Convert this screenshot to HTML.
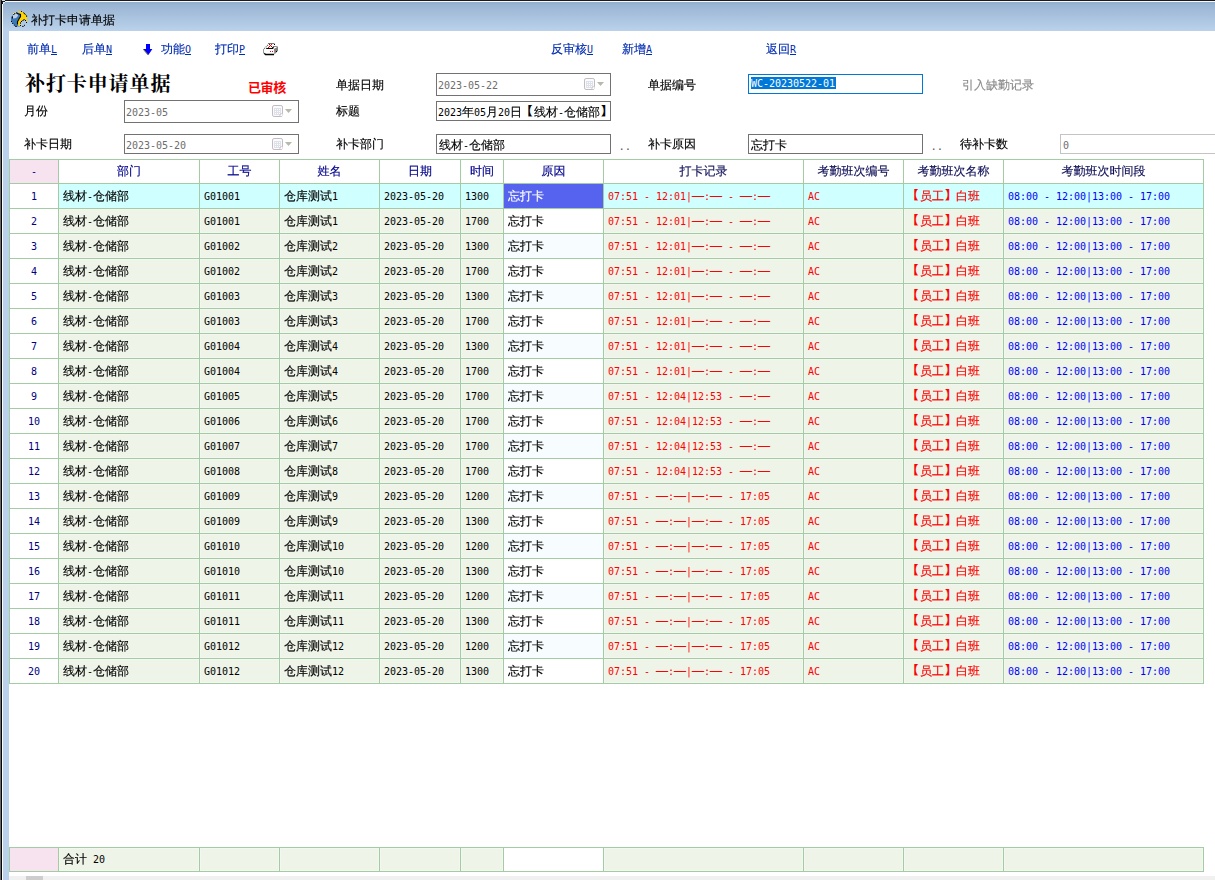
<!DOCTYPE html>
<html lang="zh-CN">
<head>
<meta charset="utf-8">
<title>补打卡申请单据</title>
<style>
*{box-sizing:border-box;margin:0;padding:0}
html,body{width:1215px;height:880px;overflow:hidden;background:#fff}
body{position:relative;-webkit-text-stroke:0.15px;font-family:"Liberation Sans", "WenQuanYi Zen Hei", "Noto Sans CJK SC", sans-serif;font-size:12px;color:#000;line-height:14px}
.abs,.t,.box,.c{position:absolute;white-space:nowrap}
.l{-webkit-text-stroke:0;font-family:"DejaVu Sans Mono","Liberation Mono",monospace;font-size:10px;letter-spacing:-0.02px}
#tb{left:0;top:0;width:1215px;height:31px;background:linear-gradient(#90adcd 2px,#9ab5d3 5px,#b9d1ea 30px)}
#tbt{left:0;top:0;width:1215px;height:1px;background:#1a1a1a}
#tbh{left:5px;top:1px;width:1210px;height:1px;background:#f6f9fd}
#lb{left:0;top:31px;width:9px;height:849px;background:#b9d1ea}
#lb0{left:0;top:0;width:1px;height:880px;background:#6a6a6a}
#lb1{left:1px;top:1px;width:1px;height:879px;background:#050505}
#lb2{left:2px;top:4px;width:1px;height:876px;background:#fbfdff}
.t{height:14px;line-height:14px}
.m{color:#002cb0}
.m u{text-decoration:underline}
.box{border:1px solid #727272;background:#fff;line-height:14px}
.box span.v{position:absolute;left:1px}
.gr{color:#6d6d6d}
#grid{left:9px;top:159px;width:1195px;height:525px;background:#a4cca4}
#foot{left:9px;top:847px;width:1195px;height:25px;background:#a4cca4}
.c{height:24px;line-height:24px;padding-left:4px;overflow:hidden;background:#fff}
.c.h{text-align:center;padding-left:0;line-height:23px;color:#00008c;background:#fff}
.c.hd{color:#101058}
.c.pk{background:#f6e3ef}
.c.n{text-align:center;padding-left:0;color:#000080;background:#fff}
.c.g{background:#eef4e8;box-shadow:inset 0 0 0 1px #f4f7ef}
.c.sel{background:#d0ffff}
.c.selc{background:#5563ee;color:#fff}
.c.w{background:#fff}
.c.az{background:#f7fdfe}
.c.r{color:#ff0000}
.c.r2{color:#ff0000}
.k{font-family:"Liberation Sans","Noto Sans CJK SC",sans-serif;font-weight:bold;position:relative}
.kl{left:-1.5px}
.kr{left:1px}
.c.b{color:#0000ff}
.c.f{line-height:23px}
#sb{left:9px;top:876px;width:1206px;height:4px;background:#f0f0f0}
#sbt{left:26px;top:876px;width:17px;height:4px;background:#cdcdcd}
</style>
</head>
<body>
<div class="abs" id="tb"></div>
<div class="abs" id="lb"></div>
<div class="abs" id="tbt"></div>
<div class="abs" id="tbh"></div>
<div class="abs" id="lb0"></div>
<div class="abs" id="lb1"></div>
<div class="abs" id="lb2"></div>

<div class="abs" style="left:2px;top:0;width:3px;height:1px;background:#d5e0ee"></div>
<div class="abs" style="left:2px;top:1px;width:3px;height:1px;background:#151515"></div>
<div class="abs" style="left:2px;top:2px;width:1px;height:2px;background:#151515"></div>
<div class="abs" style="left:3px;top:2px;width:2px;height:1px;background:#e6edf6"></div>
<div class="abs" style="left:3px;top:3px;width:1px;height:1px;background:#e6edf6"></div>
<!-- app icon -->
<svg class="abs" style="left:11px;top:11px" width="17" height="16" viewBox="0 0 17 16">
<path d="M5.5 1.3 L6.5 2.5 L9.5 3.5 L9.5 5.8 L8.5 7 L7.5 9 L6.5 10.8 L6.5 13.5 L7 14.5 L9.5 15.5 L4.5 15.5 L0 10.5 L0 6.2 L1.3 5.2 L2 3.3 L4 2.7 Z" fill="#3b79b4"/>
<path d="M2.2 3.5 L5 2.7 L6.8 3.6 L7 4.8 L5.8 6.2 L4.4 7.3 L2 7.5 L1.6 5.2 Z" fill="#bfd0e6"/>
<path d="M6 .3 L10.5 .2 L14.5 3.5 L16 5.3 L16 11 L15.5 10.5 L13 8 L10.5 9.5 L9 14.5 L7 14.5 L7 9.5 L9 7 L10 4.5 L9 2 Z" fill="#ffd200"/>
<path d="M5.5 1.3 L6.5 2.5 L9.5 3.5 L9.5 5.8 L8.5 7 L7.5 9 L6.5 10.8 L6.5 13.5" fill="none" stroke="#000" stroke-width="1.1"/>
<path d="M2 3.3 L4 2.7 M1.3 5.2 L1.5 7.5 M0 10.5 h1 M1.2 12.5 h1 M2.8 14.2 h1 M4.2 15.4 H5.8 M10 .4 h1 M12.3 1.6 L14.6 3.7 M15.6 4.4 v1.4 M15 11.5 h1 M9.5 11.4 v1.3 M10 10.5 h1 M11.4 9.6 L13.6 8.5 M14 9.5 h1 M9 14.5 h1 M11.2 15.4 h1.4 M13 14.3 h1" fill="none" stroke="#000" stroke-width="1"/>
<rect x="2" y="2" width="1" height="1" fill="#ffe680"/><rect x="4" y="1" width="1" height="1" fill="#ffd200"/>
</svg>
<div class="t" style="left:31px;top:13px">补打卡申请单据</div>

<!-- toolbar -->
<div class="t m" style="left:27px;top:42px">前单<u class="l">L</u></div>
<div class="t m" style="left:82px;top:42px">后单<u class="l">N</u></div>
<svg class="abs" style="left:142px;top:43px" width="12" height="13" viewBox="0 0 12 13"><path d="M4 1 H8 V6 H10.4 L6.3 11.9 L1.3 6 H4 Z" fill="#0000ff"/><path d="M1.3 6.3 L6 11.9" stroke="#6b6b28" stroke-width="1" fill="none"/></svg>
<div class="t m" style="left:161px;top:42px">功能<u class="l">O</u></div>
<div class="t m" style="left:215px;top:42px">打印<u class="l">P</u></div>
<svg class="abs" style="left:262px;top:42px" width="18" height="14" viewBox="0 0 18 14">
<path d="M6 1.5 H12.5" stroke="#777" stroke-width="1"/><rect x="12" y="2" width="1" height="1" fill="#000"/>
<path d="M6 3 L2 7" stroke="#707070" stroke-width="1.1" stroke-dasharray="1.2 .9"/>
<g fill="#ff0000"><rect x="7" y="2" width="1" height="1" fill="#a00000"/><rect x="9" y="2" width="1" height="1"/><rect x="8" y="3" width="1" height="1"/><rect x="7" y="4" width="1" height="1"/><rect x="9" y="4" width="1" height="1" fill="#a00000"/><rect x="6" y="5" width="1" height="1"/><rect x="10" y="5" width="1" height="1" fill="#c02020"/></g>
<path d="M4.2 6.5 H10.8 L11.6 4.4" fill="none" stroke="#000" stroke-width="1.1"/>
<path d="M11.6 4.5 H14.8 L15.8 5.2" fill="none" stroke="#8c8c8c" stroke-width="1"/>
<path d="M12 7 L16 4.6 L16 8.8 L12.4 12.6 Z" fill="#808080"/>
<path d="M1.5 7 V11.5" stroke="#999" stroke-width="1"/>
<path d="M2.3 11.3 L3.5 12.5 H12" fill="none" stroke="#000" stroke-width="1.3"/>
<rect x="14" y="9" width="1" height="1" fill="#000"/>
<rect x="8" y="9" width="1" height="1" fill="#ff0000"/><rect x="10" y="9" width="1" height="1" fill="#ff0000"/>
</svg>
<div class="t m" style="left:551px;top:42px">反审核<u class="l">U</u></div>
<div class="t m" style="left:622px;top:42px">新增<u class="l">A</u></div>
<div class="t m" style="left:766px;top:42px">返回<u class="l">R</u></div>

<!-- form -->
<div class="abs" id="bigt" style="-webkit-text-stroke:0;left:25px;top:70px;height:28px;line-height:28px;font-family:'Liberation Serif','Noto Serif CJK SC',serif;font-weight:bold;font-size:20px;letter-spacing:0.9px">补打卡申请单据</div>
<div class="abs" id="ysh" style="-webkit-text-stroke:0;left:248px;top:80px;height:16px;line-height:16px;font-weight:bold;font-size:13px;color:#ff0000;letter-spacing:-0.4px;font-family:'Liberation Sans','Noto Sans CJK SC',sans-serif">已审核</div>

<div class="t" style="left:336px;top:78px">单据日期</div>
<div class="box" style="left:436px;top:73px;width:175px;height:23px"><span class="v gr" style="top:4px"><span class="l">2023-05-22</span></span><svg class="abs" style="left:147px;top:4px" width="20" height="12" viewBox="0 0 20 12"><rect x=".5" y=".5" width="10" height="11" rx="1.6" fill="#fbfbff" stroke="#c4bbbf"/><rect x="2" y="3" width="7" height="7" fill="#dde2ea"/><path d="M3 4h1v1h-1zM5 4h1v1h-1zM7 4h1v1h-1zM3 6h1v1h-1zM5 6h1v1h-1zM7 6h1v1h-1zM3 8h1v1h-1zM5 8h1v1h-1zM7 8h1v1h-1z" fill="#fafcff"/><path d="M8 11 L10.5 8.5 L10.5 11Z" fill="#fff"/><path d="M7.8 11 L8.2 9 L10.6 8.4" fill="none" stroke="#cac1c5" stroke-width=".8"/><path d="M13 4h7l-3.5 4z" fill="#b8b8ac"/></svg></div>
<div class="t" style="left:648px;top:78px">单据编号</div>
<div class="box" style="left:748px;top:74px;width:175px;height:20px;border-color:#0078d7"><span class="abs" style="left:2px;top:2px;height:12px;width:85px;background:#0078d7"></span><span class="v" style="left:2px;top:1px;color:#fff"><span class="l">WC-20230522-01</span></span></div>
<div class="t" style="left:962px;top:78px;color:#8a8a8a">引入缺勤记录</div>

<div class="t" style="left:24px;top:104px">月份</div>
<div class="box" style="left:124px;top:100px;width:175px;height:23px"><span class="v gr" style="top:4px"><span class="l">2023-05</span></span><svg class="abs" style="left:147px;top:4px" width="20" height="12" viewBox="0 0 20 12"><rect x=".5" y=".5" width="10" height="11" rx="1.6" fill="#fbfbff" stroke="#c4bbbf"/><rect x="2" y="3" width="7" height="7" fill="#dde2ea"/><path d="M3 4h1v1h-1zM5 4h1v1h-1zM7 4h1v1h-1zM3 6h1v1h-1zM5 6h1v1h-1zM7 6h1v1h-1zM3 8h1v1h-1zM5 8h1v1h-1zM7 8h1v1h-1z" fill="#fafcff"/><path d="M8 11 L10.5 8.5 L10.5 11Z" fill="#fff"/><path d="M7.8 11 L8.2 9 L10.6 8.4" fill="none" stroke="#cac1c5" stroke-width=".8"/><path d="M13 4h7l-3.5 4z" fill="#b8b8ac"/></svg></div>
<div class="t" style="left:336px;top:104px">标题</div>
<div class="box" style="left:436px;top:101px;width:175px;height:20px;overflow:hidden"><span class="v" style="top:3px"><span class="l">2023</span>年<span class="l">05</span>月<span class="l">20</span>日<span class="k kl">【</span>线材<span class="l">-</span>仓储部<span class="k kr">】</span></span></div>

<div class="t" style="left:24px;top:137px">补卡日期</div>
<div class="box" style="left:124px;top:134px;width:175px;height:20px"><span class="v gr" style="top:3px"><span class="l">2023-05-20</span></span><svg class="abs" style="left:147px;top:3px" width="20" height="12" viewBox="0 0 20 12"><rect x=".5" y=".5" width="10" height="11" rx="1.6" fill="#fbfbff" stroke="#c4bbbf"/><rect x="2" y="3" width="7" height="7" fill="#dde2ea"/><path d="M3 4h1v1h-1zM5 4h1v1h-1zM7 4h1v1h-1zM3 6h1v1h-1zM5 6h1v1h-1zM7 6h1v1h-1zM3 8h1v1h-1zM5 8h1v1h-1zM7 8h1v1h-1z" fill="#fafcff"/><path d="M8 11 L10.5 8.5 L10.5 11Z" fill="#fff"/><path d="M7.8 11 L8.2 9 L10.6 8.4" fill="none" stroke="#cac1c5" stroke-width=".8"/><path d="M13 4h7l-3.5 4z" fill="#b8b8ac"/></svg></div>
<div class="t" style="left:336px;top:137px">补卡部门</div>
<div class="box" style="left:436px;top:134px;width:175px;height:20px"><span class="v" style="left:2px;top:3px">线材<span class="l">-</span>仓储部</span></div>
<div class="t" style="left:620px;top:139px;color:#555"><span style="letter-spacing:3px">..</span></div>
<div class="t" style="left:648px;top:137px">补卡原因</div>
<div class="box" style="left:748px;top:134px;width:175px;height:20px"><span class="v" style="left:2px;top:3px">忘打卡</span></div>
<div class="t" style="left:932px;top:139px;color:#555"><span style="letter-spacing:3px">..</span></div>
<div class="t" style="left:960px;top:137px">待补卡数</div>
<div class="box" style="left:1060px;top:134px;width:160px;height:20px;border-color:#c4c4c4"><span class="v gr" style="left:2px;top:3px"><span class="l">0</span></span></div>

<div class="abs" id="grid">
<div class="c h pk" style="left:1px;top:1px;width:48px;height:23px"><span class="l">-</span></div>
<div class="c h" style="left:50px;top:1px;width:140px;height:23px">部门</div>
<div class="c h" style="left:191px;top:1px;width:79px;height:23px">工号</div>
<div class="c h" style="left:271px;top:1px;width:99px;height:23px">姓名</div>
<div class="c h" style="left:371px;top:1px;width:80px;height:23px">日期</div>
<div class="c h" style="left:452px;top:1px;width:42px;height:23px">时间</div>
<div class="c h" style="left:495px;top:1px;width:99px;height:23px">原因</div>
<div class="c h hd" style="left:595px;top:1px;width:199px;height:23px">打卡记录</div>
<div class="c h hd" style="left:795px;top:1px;width:99px;height:23px">考勤班次编号</div>
<div class="c h hd" style="left:895px;top:1px;width:99px;height:23px">考勤班次名称</div>
<div class="c h hd" style="left:995px;top:1px;width:199px;height:23px">考勤班次时间段</div>
<div class="c n" style="left:1px;top:25px;width:48px"><span class="l">1</span></div>
<div class="c sel" style="left:50px;top:25px;width:140px">线材<span class="l">-</span>仓储部</div>
<div class="c sel" style="left:191px;top:25px;width:79px"><span class="l">G01001</span></div>
<div class="c sel" style="left:271px;top:25px;width:99px">仓库测试<span class="l">1</span></div>
<div class="c sel" style="left:371px;top:25px;width:80px"><span class="l">2023-05-20</span></div>
<div class="c sel" style="left:452px;top:25px;width:42px"><span class="l">1300</span></div>
<div class="c selc" style="left:495px;top:25px;width:99px">忘打卡</div>
<div class="c sel r" style="left:595px;top:25px;width:199px"><span class="l">07:51 - 12:01|</span>—<span class="l">:</span>—<span class="l"> - </span>—<span class="l">:</span>—</div>
<div class="c sel r" style="left:795px;top:25px;width:99px"><span class="l">AC</span></div>
<div class="c sel r2" style="left:895px;top:25px;width:99px"><span class="k kl">【</span>员工<span class="k kr">】</span>白班</div>
<div class="c sel b" style="left:995px;top:25px;width:199px"><span class="l">08:00 - 12:00|13:00 - 17:00</span></div>
<div class="c n" style="left:1px;top:50px;width:48px"><span class="l">2</span></div>
<div class="c g" style="left:50px;top:50px;width:140px">线材<span class="l">-</span>仓储部</div>
<div class="c g" style="left:191px;top:50px;width:79px"><span class="l">G01001</span></div>
<div class="c g" style="left:271px;top:50px;width:99px">仓库测试<span class="l">1</span></div>
<div class="c g" style="left:371px;top:50px;width:80px"><span class="l">2023-05-20</span></div>
<div class="c g" style="left:452px;top:50px;width:42px"><span class="l">1700</span></div>
<div class="c w" style="left:495px;top:50px;width:99px">忘打卡</div>
<div class="c g r" style="left:595px;top:50px;width:199px"><span class="l">07:51 - 12:01|</span>—<span class="l">:</span>—<span class="l"> - </span>—<span class="l">:</span>—</div>
<div class="c g r" style="left:795px;top:50px;width:99px"><span class="l">AC</span></div>
<div class="c g r2" style="left:895px;top:50px;width:99px"><span class="k kl">【</span>员工<span class="k kr">】</span>白班</div>
<div class="c g b" style="left:995px;top:50px;width:199px"><span class="l">08:00 - 12:00|13:00 - 17:00</span></div>
<div class="c n" style="left:1px;top:75px;width:48px"><span class="l">3</span></div>
<div class="c g" style="left:50px;top:75px;width:140px">线材<span class="l">-</span>仓储部</div>
<div class="c g" style="left:191px;top:75px;width:79px"><span class="l">G01002</span></div>
<div class="c g" style="left:271px;top:75px;width:99px">仓库测试<span class="l">2</span></div>
<div class="c g" style="left:371px;top:75px;width:80px"><span class="l">2023-05-20</span></div>
<div class="c g" style="left:452px;top:75px;width:42px"><span class="l">1300</span></div>
<div class="c az" style="left:495px;top:75px;width:99px">忘打卡</div>
<div class="c g r" style="left:595px;top:75px;width:199px"><span class="l">07:51 - 12:01|</span>—<span class="l">:</span>—<span class="l"> - </span>—<span class="l">:</span>—</div>
<div class="c g r" style="left:795px;top:75px;width:99px"><span class="l">AC</span></div>
<div class="c g r2" style="left:895px;top:75px;width:99px"><span class="k kl">【</span>员工<span class="k kr">】</span>白班</div>
<div class="c g b" style="left:995px;top:75px;width:199px"><span class="l">08:00 - 12:00|13:00 - 17:00</span></div>
<div class="c n" style="left:1px;top:100px;width:48px"><span class="l">4</span></div>
<div class="c g" style="left:50px;top:100px;width:140px">线材<span class="l">-</span>仓储部</div>
<div class="c g" style="left:191px;top:100px;width:79px"><span class="l">G01002</span></div>
<div class="c g" style="left:271px;top:100px;width:99px">仓库测试<span class="l">2</span></div>
<div class="c g" style="left:371px;top:100px;width:80px"><span class="l">2023-05-20</span></div>
<div class="c g" style="left:452px;top:100px;width:42px"><span class="l">1700</span></div>
<div class="c w" style="left:495px;top:100px;width:99px">忘打卡</div>
<div class="c g r" style="left:595px;top:100px;width:199px"><span class="l">07:51 - 12:01|</span>—<span class="l">:</span>—<span class="l"> - </span>—<span class="l">:</span>—</div>
<div class="c g r" style="left:795px;top:100px;width:99px"><span class="l">AC</span></div>
<div class="c g r2" style="left:895px;top:100px;width:99px"><span class="k kl">【</span>员工<span class="k kr">】</span>白班</div>
<div class="c g b" style="left:995px;top:100px;width:199px"><span class="l">08:00 - 12:00|13:00 - 17:00</span></div>
<div class="c n" style="left:1px;top:125px;width:48px"><span class="l">5</span></div>
<div class="c g" style="left:50px;top:125px;width:140px">线材<span class="l">-</span>仓储部</div>
<div class="c g" style="left:191px;top:125px;width:79px"><span class="l">G01003</span></div>
<div class="c g" style="left:271px;top:125px;width:99px">仓库测试<span class="l">3</span></div>
<div class="c g" style="left:371px;top:125px;width:80px"><span class="l">2023-05-20</span></div>
<div class="c g" style="left:452px;top:125px;width:42px"><span class="l">1300</span></div>
<div class="c az" style="left:495px;top:125px;width:99px">忘打卡</div>
<div class="c g r" style="left:595px;top:125px;width:199px"><span class="l">07:51 - 12:01|</span>—<span class="l">:</span>—<span class="l"> - </span>—<span class="l">:</span>—</div>
<div class="c g r" style="left:795px;top:125px;width:99px"><span class="l">AC</span></div>
<div class="c g r2" style="left:895px;top:125px;width:99px"><span class="k kl">【</span>员工<span class="k kr">】</span>白班</div>
<div class="c g b" style="left:995px;top:125px;width:199px"><span class="l">08:00 - 12:00|13:00 - 17:00</span></div>
<div class="c n" style="left:1px;top:150px;width:48px"><span class="l">6</span></div>
<div class="c g" style="left:50px;top:150px;width:140px">线材<span class="l">-</span>仓储部</div>
<div class="c g" style="left:191px;top:150px;width:79px"><span class="l">G01003</span></div>
<div class="c g" style="left:271px;top:150px;width:99px">仓库测试<span class="l">3</span></div>
<div class="c g" style="left:371px;top:150px;width:80px"><span class="l">2023-05-20</span></div>
<div class="c g" style="left:452px;top:150px;width:42px"><span class="l">1700</span></div>
<div class="c w" style="left:495px;top:150px;width:99px">忘打卡</div>
<div class="c g r" style="left:595px;top:150px;width:199px"><span class="l">07:51 - 12:01|</span>—<span class="l">:</span>—<span class="l"> - </span>—<span class="l">:</span>—</div>
<div class="c g r" style="left:795px;top:150px;width:99px"><span class="l">AC</span></div>
<div class="c g r2" style="left:895px;top:150px;width:99px"><span class="k kl">【</span>员工<span class="k kr">】</span>白班</div>
<div class="c g b" style="left:995px;top:150px;width:199px"><span class="l">08:00 - 12:00|13:00 - 17:00</span></div>
<div class="c n" style="left:1px;top:175px;width:48px"><span class="l">7</span></div>
<div class="c g" style="left:50px;top:175px;width:140px">线材<span class="l">-</span>仓储部</div>
<div class="c g" style="left:191px;top:175px;width:79px"><span class="l">G01004</span></div>
<div class="c g" style="left:271px;top:175px;width:99px">仓库测试<span class="l">4</span></div>
<div class="c g" style="left:371px;top:175px;width:80px"><span class="l">2023-05-20</span></div>
<div class="c g" style="left:452px;top:175px;width:42px"><span class="l">1300</span></div>
<div class="c az" style="left:495px;top:175px;width:99px">忘打卡</div>
<div class="c g r" style="left:595px;top:175px;width:199px"><span class="l">07:51 - 12:01|</span>—<span class="l">:</span>—<span class="l"> - </span>—<span class="l">:</span>—</div>
<div class="c g r" style="left:795px;top:175px;width:99px"><span class="l">AC</span></div>
<div class="c g r2" style="left:895px;top:175px;width:99px"><span class="k kl">【</span>员工<span class="k kr">】</span>白班</div>
<div class="c g b" style="left:995px;top:175px;width:199px"><span class="l">08:00 - 12:00|13:00 - 17:00</span></div>
<div class="c n" style="left:1px;top:200px;width:48px"><span class="l">8</span></div>
<div class="c g" style="left:50px;top:200px;width:140px">线材<span class="l">-</span>仓储部</div>
<div class="c g" style="left:191px;top:200px;width:79px"><span class="l">G01004</span></div>
<div class="c g" style="left:271px;top:200px;width:99px">仓库测试<span class="l">4</span></div>
<div class="c g" style="left:371px;top:200px;width:80px"><span class="l">2023-05-20</span></div>
<div class="c g" style="left:452px;top:200px;width:42px"><span class="l">1700</span></div>
<div class="c w" style="left:495px;top:200px;width:99px">忘打卡</div>
<div class="c g r" style="left:595px;top:200px;width:199px"><span class="l">07:51 - 12:01|</span>—<span class="l">:</span>—<span class="l"> - </span>—<span class="l">:</span>—</div>
<div class="c g r" style="left:795px;top:200px;width:99px"><span class="l">AC</span></div>
<div class="c g r2" style="left:895px;top:200px;width:99px"><span class="k kl">【</span>员工<span class="k kr">】</span>白班</div>
<div class="c g b" style="left:995px;top:200px;width:199px"><span class="l">08:00 - 12:00|13:00 - 17:00</span></div>
<div class="c n" style="left:1px;top:225px;width:48px"><span class="l">9</span></div>
<div class="c g" style="left:50px;top:225px;width:140px">线材<span class="l">-</span>仓储部</div>
<div class="c g" style="left:191px;top:225px;width:79px"><span class="l">G01005</span></div>
<div class="c g" style="left:271px;top:225px;width:99px">仓库测试<span class="l">5</span></div>
<div class="c g" style="left:371px;top:225px;width:80px"><span class="l">2023-05-20</span></div>
<div class="c g" style="left:452px;top:225px;width:42px"><span class="l">1700</span></div>
<div class="c az" style="left:495px;top:225px;width:99px">忘打卡</div>
<div class="c g r" style="left:595px;top:225px;width:199px"><span class="l">07:51 - 12:04|12:53 - </span>—<span class="l">:</span>—</div>
<div class="c g r" style="left:795px;top:225px;width:99px"><span class="l">AC</span></div>
<div class="c g r2" style="left:895px;top:225px;width:99px"><span class="k kl">【</span>员工<span class="k kr">】</span>白班</div>
<div class="c g b" style="left:995px;top:225px;width:199px"><span class="l">08:00 - 12:00|13:00 - 17:00</span></div>
<div class="c n" style="left:1px;top:250px;width:48px"><span class="l">10</span></div>
<div class="c g" style="left:50px;top:250px;width:140px">线材<span class="l">-</span>仓储部</div>
<div class="c g" style="left:191px;top:250px;width:79px"><span class="l">G01006</span></div>
<div class="c g" style="left:271px;top:250px;width:99px">仓库测试<span class="l">6</span></div>
<div class="c g" style="left:371px;top:250px;width:80px"><span class="l">2023-05-20</span></div>
<div class="c g" style="left:452px;top:250px;width:42px"><span class="l">1700</span></div>
<div class="c w" style="left:495px;top:250px;width:99px">忘打卡</div>
<div class="c g r" style="left:595px;top:250px;width:199px"><span class="l">07:51 - 12:04|12:53 - </span>—<span class="l">:</span>—</div>
<div class="c g r" style="left:795px;top:250px;width:99px"><span class="l">AC</span></div>
<div class="c g r2" style="left:895px;top:250px;width:99px"><span class="k kl">【</span>员工<span class="k kr">】</span>白班</div>
<div class="c g b" style="left:995px;top:250px;width:199px"><span class="l">08:00 - 12:00|13:00 - 17:00</span></div>
<div class="c n" style="left:1px;top:275px;width:48px"><span class="l">11</span></div>
<div class="c g" style="left:50px;top:275px;width:140px">线材<span class="l">-</span>仓储部</div>
<div class="c g" style="left:191px;top:275px;width:79px"><span class="l">G01007</span></div>
<div class="c g" style="left:271px;top:275px;width:99px">仓库测试<span class="l">7</span></div>
<div class="c g" style="left:371px;top:275px;width:80px"><span class="l">2023-05-20</span></div>
<div class="c g" style="left:452px;top:275px;width:42px"><span class="l">1700</span></div>
<div class="c az" style="left:495px;top:275px;width:99px">忘打卡</div>
<div class="c g r" style="left:595px;top:275px;width:199px"><span class="l">07:51 - 12:04|12:53 - </span>—<span class="l">:</span>—</div>
<div class="c g r" style="left:795px;top:275px;width:99px"><span class="l">AC</span></div>
<div class="c g r2" style="left:895px;top:275px;width:99px"><span class="k kl">【</span>员工<span class="k kr">】</span>白班</div>
<div class="c g b" style="left:995px;top:275px;width:199px"><span class="l">08:00 - 12:00|13:00 - 17:00</span></div>
<div class="c n" style="left:1px;top:300px;width:48px"><span class="l">12</span></div>
<div class="c g" style="left:50px;top:300px;width:140px">线材<span class="l">-</span>仓储部</div>
<div class="c g" style="left:191px;top:300px;width:79px"><span class="l">G01008</span></div>
<div class="c g" style="left:271px;top:300px;width:99px">仓库测试<span class="l">8</span></div>
<div class="c g" style="left:371px;top:300px;width:80px"><span class="l">2023-05-20</span></div>
<div class="c g" style="left:452px;top:300px;width:42px"><span class="l">1700</span></div>
<div class="c w" style="left:495px;top:300px;width:99px">忘打卡</div>
<div class="c g r" style="left:595px;top:300px;width:199px"><span class="l">07:51 - 12:04|12:53 - </span>—<span class="l">:</span>—</div>
<div class="c g r" style="left:795px;top:300px;width:99px"><span class="l">AC</span></div>
<div class="c g r2" style="left:895px;top:300px;width:99px"><span class="k kl">【</span>员工<span class="k kr">】</span>白班</div>
<div class="c g b" style="left:995px;top:300px;width:199px"><span class="l">08:00 - 12:00|13:00 - 17:00</span></div>
<div class="c n" style="left:1px;top:325px;width:48px"><span class="l">13</span></div>
<div class="c g" style="left:50px;top:325px;width:140px">线材<span class="l">-</span>仓储部</div>
<div class="c g" style="left:191px;top:325px;width:79px"><span class="l">G01009</span></div>
<div class="c g" style="left:271px;top:325px;width:99px">仓库测试<span class="l">9</span></div>
<div class="c g" style="left:371px;top:325px;width:80px"><span class="l">2023-05-20</span></div>
<div class="c g" style="left:452px;top:325px;width:42px"><span class="l">1200</span></div>
<div class="c az" style="left:495px;top:325px;width:99px">忘打卡</div>
<div class="c g r" style="left:595px;top:325px;width:199px"><span class="l">07:51 - </span>—<span class="l">:</span>—<span class="l">|</span>—<span class="l">:</span>—<span class="l"> - 17:05</span></div>
<div class="c g r" style="left:795px;top:325px;width:99px"><span class="l">AC</span></div>
<div class="c g r2" style="left:895px;top:325px;width:99px"><span class="k kl">【</span>员工<span class="k kr">】</span>白班</div>
<div class="c g b" style="left:995px;top:325px;width:199px"><span class="l">08:00 - 12:00|13:00 - 17:00</span></div>
<div class="c n" style="left:1px;top:350px;width:48px"><span class="l">14</span></div>
<div class="c g" style="left:50px;top:350px;width:140px">线材<span class="l">-</span>仓储部</div>
<div class="c g" style="left:191px;top:350px;width:79px"><span class="l">G01009</span></div>
<div class="c g" style="left:271px;top:350px;width:99px">仓库测试<span class="l">9</span></div>
<div class="c g" style="left:371px;top:350px;width:80px"><span class="l">2023-05-20</span></div>
<div class="c g" style="left:452px;top:350px;width:42px"><span class="l">1300</span></div>
<div class="c w" style="left:495px;top:350px;width:99px">忘打卡</div>
<div class="c g r" style="left:595px;top:350px;width:199px"><span class="l">07:51 - </span>—<span class="l">:</span>—<span class="l">|</span>—<span class="l">:</span>—<span class="l"> - 17:05</span></div>
<div class="c g r" style="left:795px;top:350px;width:99px"><span class="l">AC</span></div>
<div class="c g r2" style="left:895px;top:350px;width:99px"><span class="k kl">【</span>员工<span class="k kr">】</span>白班</div>
<div class="c g b" style="left:995px;top:350px;width:199px"><span class="l">08:00 - 12:00|13:00 - 17:00</span></div>
<div class="c n" style="left:1px;top:375px;width:48px"><span class="l">15</span></div>
<div class="c g" style="left:50px;top:375px;width:140px">线材<span class="l">-</span>仓储部</div>
<div class="c g" style="left:191px;top:375px;width:79px"><span class="l">G01010</span></div>
<div class="c g" style="left:271px;top:375px;width:99px">仓库测试<span class="l">10</span></div>
<div class="c g" style="left:371px;top:375px;width:80px"><span class="l">2023-05-20</span></div>
<div class="c g" style="left:452px;top:375px;width:42px"><span class="l">1200</span></div>
<div class="c az" style="left:495px;top:375px;width:99px">忘打卡</div>
<div class="c g r" style="left:595px;top:375px;width:199px"><span class="l">07:51 - </span>—<span class="l">:</span>—<span class="l">|</span>—<span class="l">:</span>—<span class="l"> - 17:05</span></div>
<div class="c g r" style="left:795px;top:375px;width:99px"><span class="l">AC</span></div>
<div class="c g r2" style="left:895px;top:375px;width:99px"><span class="k kl">【</span>员工<span class="k kr">】</span>白班</div>
<div class="c g b" style="left:995px;top:375px;width:199px"><span class="l">08:00 - 12:00|13:00 - 17:00</span></div>
<div class="c n" style="left:1px;top:400px;width:48px"><span class="l">16</span></div>
<div class="c g" style="left:50px;top:400px;width:140px">线材<span class="l">-</span>仓储部</div>
<div class="c g" style="left:191px;top:400px;width:79px"><span class="l">G01010</span></div>
<div class="c g" style="left:271px;top:400px;width:99px">仓库测试<span class="l">10</span></div>
<div class="c g" style="left:371px;top:400px;width:80px"><span class="l">2023-05-20</span></div>
<div class="c g" style="left:452px;top:400px;width:42px"><span class="l">1300</span></div>
<div class="c w" style="left:495px;top:400px;width:99px">忘打卡</div>
<div class="c g r" style="left:595px;top:400px;width:199px"><span class="l">07:51 - </span>—<span class="l">:</span>—<span class="l">|</span>—<span class="l">:</span>—<span class="l"> - 17:05</span></div>
<div class="c g r" style="left:795px;top:400px;width:99px"><span class="l">AC</span></div>
<div class="c g r2" style="left:895px;top:400px;width:99px"><span class="k kl">【</span>员工<span class="k kr">】</span>白班</div>
<div class="c g b" style="left:995px;top:400px;width:199px"><span class="l">08:00 - 12:00|13:00 - 17:00</span></div>
<div class="c n" style="left:1px;top:425px;width:48px"><span class="l">17</span></div>
<div class="c g" style="left:50px;top:425px;width:140px">线材<span class="l">-</span>仓储部</div>
<div class="c g" style="left:191px;top:425px;width:79px"><span class="l">G01011</span></div>
<div class="c g" style="left:271px;top:425px;width:99px">仓库测试<span class="l">11</span></div>
<div class="c g" style="left:371px;top:425px;width:80px"><span class="l">2023-05-20</span></div>
<div class="c g" style="left:452px;top:425px;width:42px"><span class="l">1200</span></div>
<div class="c az" style="left:495px;top:425px;width:99px">忘打卡</div>
<div class="c g r" style="left:595px;top:425px;width:199px"><span class="l">07:51 - </span>—<span class="l">:</span>—<span class="l">|</span>—<span class="l">:</span>—<span class="l"> - 17:05</span></div>
<div class="c g r" style="left:795px;top:425px;width:99px"><span class="l">AC</span></div>
<div class="c g r2" style="left:895px;top:425px;width:99px"><span class="k kl">【</span>员工<span class="k kr">】</span>白班</div>
<div class="c g b" style="left:995px;top:425px;width:199px"><span class="l">08:00 - 12:00|13:00 - 17:00</span></div>
<div class="c n" style="left:1px;top:450px;width:48px"><span class="l">18</span></div>
<div class="c g" style="left:50px;top:450px;width:140px">线材<span class="l">-</span>仓储部</div>
<div class="c g" style="left:191px;top:450px;width:79px"><span class="l">G01011</span></div>
<div class="c g" style="left:271px;top:450px;width:99px">仓库测试<span class="l">11</span></div>
<div class="c g" style="left:371px;top:450px;width:80px"><span class="l">2023-05-20</span></div>
<div class="c g" style="left:452px;top:450px;width:42px"><span class="l">1300</span></div>
<div class="c w" style="left:495px;top:450px;width:99px">忘打卡</div>
<div class="c g r" style="left:595px;top:450px;width:199px"><span class="l">07:51 - </span>—<span class="l">:</span>—<span class="l">|</span>—<span class="l">:</span>—<span class="l"> - 17:05</span></div>
<div class="c g r" style="left:795px;top:450px;width:99px"><span class="l">AC</span></div>
<div class="c g r2" style="left:895px;top:450px;width:99px"><span class="k kl">【</span>员工<span class="k kr">】</span>白班</div>
<div class="c g b" style="left:995px;top:450px;width:199px"><span class="l">08:00 - 12:00|13:00 - 17:00</span></div>
<div class="c n" style="left:1px;top:475px;width:48px"><span class="l">19</span></div>
<div class="c g" style="left:50px;top:475px;width:140px">线材<span class="l">-</span>仓储部</div>
<div class="c g" style="left:191px;top:475px;width:79px"><span class="l">G01012</span></div>
<div class="c g" style="left:271px;top:475px;width:99px">仓库测试<span class="l">12</span></div>
<div class="c g" style="left:371px;top:475px;width:80px"><span class="l">2023-05-20</span></div>
<div class="c g" style="left:452px;top:475px;width:42px"><span class="l">1200</span></div>
<div class="c az" style="left:495px;top:475px;width:99px">忘打卡</div>
<div class="c g r" style="left:595px;top:475px;width:199px"><span class="l">07:51 - </span>—<span class="l">:</span>—<span class="l">|</span>—<span class="l">:</span>—<span class="l"> - 17:05</span></div>
<div class="c g r" style="left:795px;top:475px;width:99px"><span class="l">AC</span></div>
<div class="c g r2" style="left:895px;top:475px;width:99px"><span class="k kl">【</span>员工<span class="k kr">】</span>白班</div>
<div class="c g b" style="left:995px;top:475px;width:199px"><span class="l">08:00 - 12:00|13:00 - 17:00</span></div>
<div class="c n" style="left:1px;top:500px;width:48px"><span class="l">20</span></div>
<div class="c g" style="left:50px;top:500px;width:140px">线材<span class="l">-</span>仓储部</div>
<div class="c g" style="left:191px;top:500px;width:79px"><span class="l">G01012</span></div>
<div class="c g" style="left:271px;top:500px;width:99px">仓库测试<span class="l">12</span></div>
<div class="c g" style="left:371px;top:500px;width:80px"><span class="l">2023-05-20</span></div>
<div class="c g" style="left:452px;top:500px;width:42px"><span class="l">1300</span></div>
<div class="c w" style="left:495px;top:500px;width:99px">忘打卡</div>
<div class="c g r" style="left:595px;top:500px;width:199px"><span class="l">07:51 - </span>—<span class="l">:</span>—<span class="l">|</span>—<span class="l">:</span>—<span class="l"> - 17:05</span></div>
<div class="c g r" style="left:795px;top:500px;width:99px"><span class="l">AC</span></div>
<div class="c g r2" style="left:895px;top:500px;width:99px"><span class="k kl">【</span>员工<span class="k kr">】</span>白班</div>
<div class="c g b" style="left:995px;top:500px;width:199px"><span class="l">08:00 - 12:00|13:00 - 17:00</span></div>
</div>
<div class="abs" id="foot">
<div class="c f pk" style="left:1px;top:1px;width:48px;height:23px"></div>
<div class="c f g" style="left:50px;top:1px;width:140px;height:23px">合计<span class="l"> 20</span></div>
<div class="c f g" style="left:191px;top:1px;width:79px;height:23px"></div>
<div class="c f g" style="left:271px;top:1px;width:99px;height:23px"></div>
<div class="c f g" style="left:371px;top:1px;width:80px;height:23px"></div>
<div class="c f g" style="left:452px;top:1px;width:42px;height:23px"></div>
<div class="c f w" style="left:495px;top:1px;width:99px;height:23px"></div>
<div class="c f g" style="left:595px;top:1px;width:199px;height:23px"></div>
<div class="c f g" style="left:795px;top:1px;width:99px;height:23px"></div>
<div class="c f g" style="left:895px;top:1px;width:99px;height:23px"></div>
<div class="c f g" style="left:995px;top:1px;width:199px;height:23px"></div>
</div>
<div class="abs" id="sb"></div>
<div class="abs" id="sbt"></div>
</body>
</html>
